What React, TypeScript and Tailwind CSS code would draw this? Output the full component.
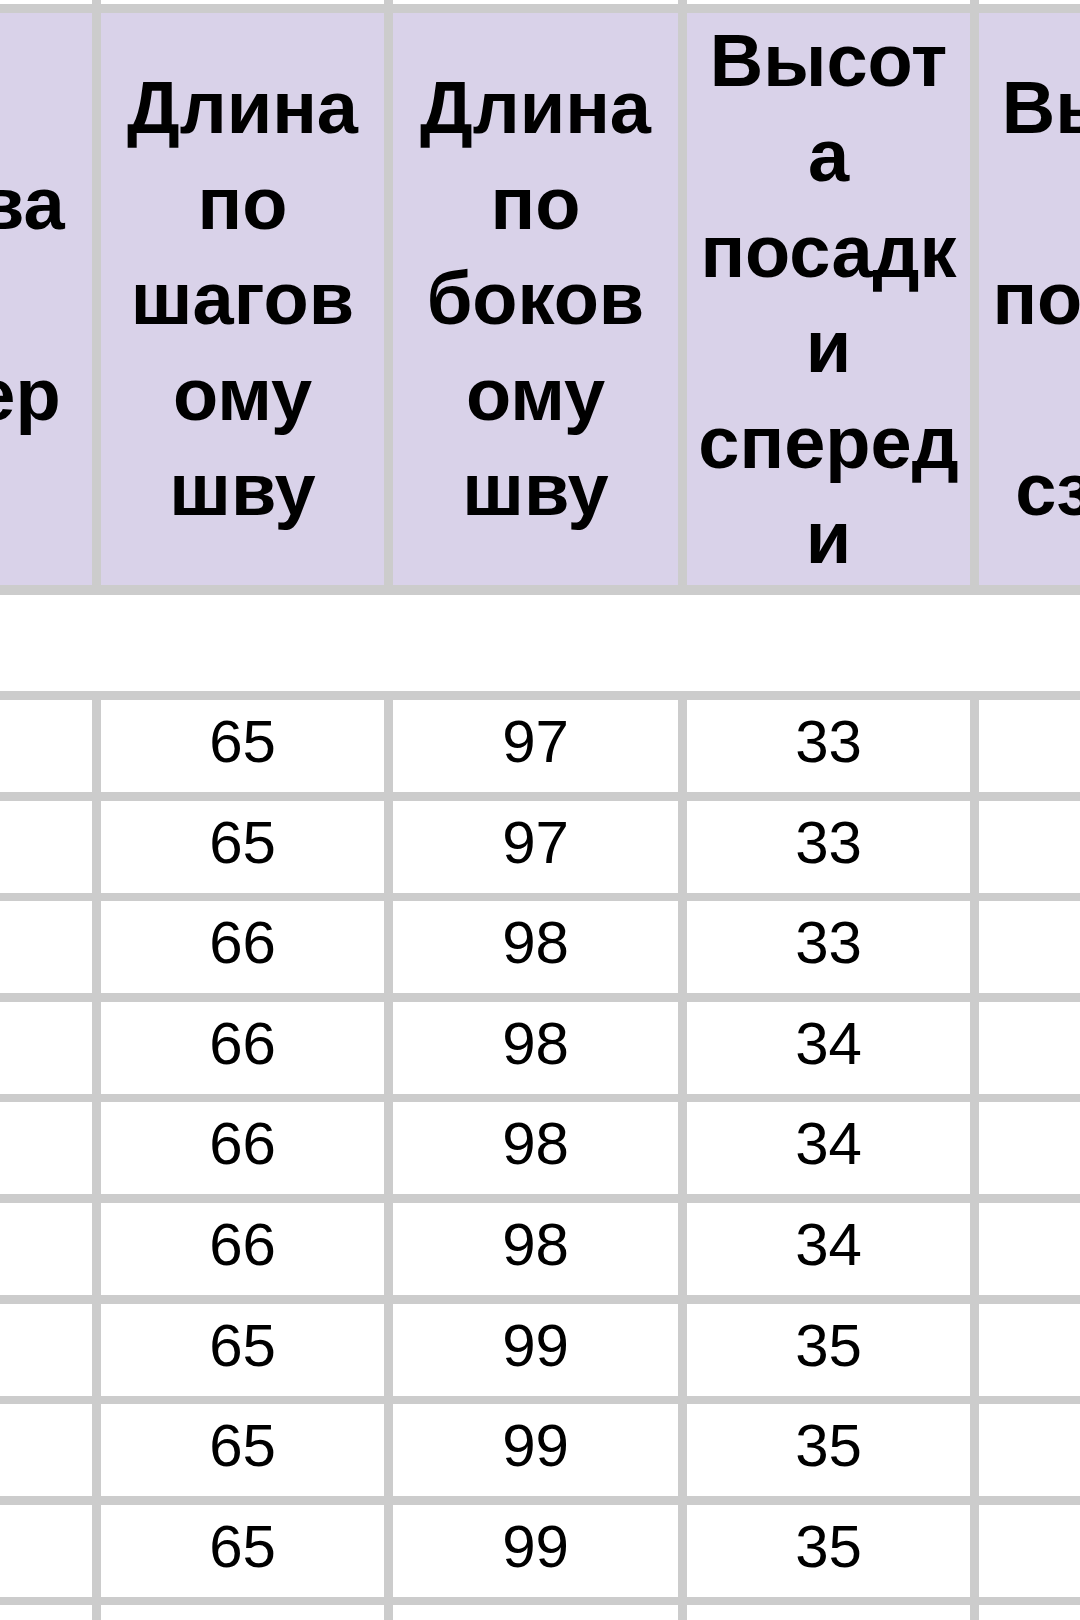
import React from 'react';

const GRID = 'grid grid-cols-[283px_283px_285px_283px_283px] gap-x-[9px]';

const headers: string[][] = [
    ['½', 'Обхва', 'т', 'бедер', 'см'],
    ['Длина', 'по', 'шагов', 'ому', 'шву'],
    ['Длина', 'по', 'боков', 'ому', 'шву'],
    ['Высот', 'а', 'посадк', 'и', 'сперед', 'и'],
    ['Высот', 'а', 'посадк', 'и', 'сзади'],
];

const rows: string[][] = [
    ['42', '65', '97', '33', '38'],
    ['44', '65', '97', '33', '38'],
    ['46', '66', '98', '33', '38'],
    ['48', '66', '98', '34', '39'],
    ['50', '66', '98', '34', '39'],
    ['52', '66', '98', '34', '39'],
    ['54', '65', '99', '35', '40'],
    ['56', '65', '99', '35', '40'],
    ['58', '65', '99', '35', '40'],
    ['60', '65', '99', '35', '40'],
];

export default function App() {
    return (
        <div className="w-[1080px] h-[1620px] overflow-hidden bg-white text-black font-['Liberation_Sans',Arial,sans-serif]">
            {/* sheet is scrolled: first column is mostly off-screen */}
            <div className="ml-[-191px] w-[1453px]">
                {/* bottom edge of the row above */}
                <div className={`${GRID} bg-[#cccccc] pb-[9px]`}>
                    {headers.map((_, i) => (
                        <div key={i} className="h-[4px] bg-white" />
                    ))}
                </div>

                {/* header row */}
                <div className={`${GRID} bg-[#cccccc] pb-[10px]`}>
                    {headers.map((lines, i) => (
                        <div
                            key={i}
                            className="h-[572px] bg-[#d9d2e9] flex items-center justify-center overflow-hidden text-center font-bold text-[74px] leading-[95.5px] whitespace-nowrap"
                        >
                            <div>
                                {lines.map((line, j) => (
                                    <div key={j}>{line}</div>
                                ))}
                            </div>
                        </div>
                    ))}
                </div>

                {/* empty row */}
                <div className="h-[96px] bg-white" />

                {/* data rows */}
                <div className={`${GRID} gap-y-[8.6px] bg-[#cccccc] pt-[9px]`}>
                    {rows.map((row, r) =>
                        row.map((value, c) => (
                            <div
                                key={`${r}-${c}`}
                                className="h-[92px] bg-white flex items-center justify-center pb-[8px] text-[60px] whitespace-nowrap"
                            >
                                {value}
                            </div>
                        ))
                    )}
                </div>
            </div>
        </div>
    );
}
